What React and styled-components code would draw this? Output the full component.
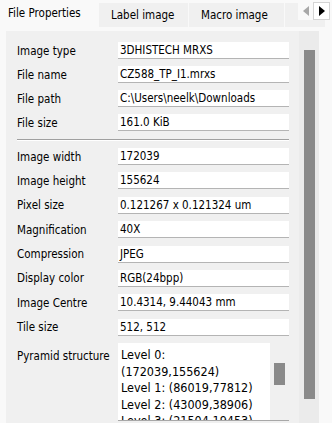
import React from "react";
import styled, { createGlobalStyle } from "styled-components";

const Global = createGlobalStyle`
  html, body { margin: 0; padding: 0; background: #f9f9f9; }
  body {
    font-family: "DejaVu Sans Condensed", "DejaVu Sans", sans-serif;
    font-stretch: condensed;
    font-size: 11.5px;
    color: #000;
  }
`;

const Window = styled.div`
  width: 332px;
  height: 423px;
  overflow: hidden;
  display: flex;
  flex-direction: column;
  background: #f9f9f9;
`;

const TabBar = styled.div`
  position: relative;
  height: 27px;
  display: flex;
  align-items: flex-start;
  padding-left: 2px;
  flex-shrink: 0;
`;

const Tab = styled.div`
  box-sizing: border-box;
  width: ${(p) => p.$w}px;
  height: ${(p) => (p.$active ? 30 : 24)}px;
  margin-top: ${(p) => (p.$active ? 0 : 3)}px;
  margin-left: ${(p) => (p.$active ? 0 : 1)}px;
  padding-left: ${(p) => p.$pad}px;
  background: ${(p) => (p.$active ? "#f9f9f9" : "#f0f0f0")};
  display: flex;
  align-items: center;
  white-space: nowrap;
  overflow: hidden;
  flex-shrink: 0;
  position: relative;
  z-index: ${(p) => (p.$active ? 2 : 1)};
  padding-bottom: ${(p) => (p.$active ? 4 : 0)}px;
`;

const Arrows = styled.div`
  position: absolute;
  top: 2px;
  right: 2px;
  display: flex;
  z-index: 3;
`;

const ArrowBtn = styled.div`
  box-sizing: border-box;
  width: ${(p) => p.$w}px;
  height: 18px;
  display: flex;
  align-items: center;
  justify-content: center;
  background: ${(p) => (p.$enabled ? "#ffffff" : "#f9f9f9")};
  border: 1px solid ${(p) => (p.$enabled ? "#d4d4d4" : "transparent")};
`;

const Pane = styled.div`
  flex: 1;
  display: flex;
  padding: 4px 13px 0 6px;
  min-height: 0;
`;

const Panel = styled.div`
  flex: 1;
  display: flex;
  background: #f0f0f0;
  min-height: 0;
`;

const Content = styled.div`
  flex: 1;
  padding: 11px 0 0 11px;
  display: flex;
  flex-direction: column;
`;

const Group = styled.div`
  display: flex;
  flex-direction: column;
  gap: ${(p) => p.$gap}px;
`;

const Row = styled.div`
  display: grid;
  grid-template-columns: 101px 171px;
  align-items: ${(p) => (p.$top ? "start" : "center")};
`;

const Label = styled.div`
  white-space: nowrap;
  line-height: 16px;
  padding-top: ${(p) => (p.$top ? 5 : 0)}px;
`;

const Field = styled.div`
  box-sizing: border-box;
  height: 17px;
  background: #ffffff;
  border-bottom: 1px solid #b4b4b4;
  padding-left: 2px;
  line-height: 16px;
  white-space: nowrap;
  overflow: hidden;
`;

const Separator = styled.div`
  width: 272px;
  height: 0;
  border-top: 1px solid #a0a0a0;
  border-bottom: 1px solid #ffffff;
  margin: 8px 0 7px 0;
`;

const TextBox = styled.div`
  box-sizing: border-box;
  height: 78px;
  background: #ffffff;
  border-bottom: 1px solid #a8a8a8;
  display: flex;
  overflow: hidden;
`;

const TextLines = styled.div`
  flex: 1;
  padding: 4px 0 0 3px;
  font-size: 12.5px;
  line-height: 16.5px;
  white-space: nowrap;
  overflow: hidden;
`;

const MiniScroll = styled.div`
  width: 19px;
  background: #f0f0f0;
  padding: 20px 0 0 4px;
  box-sizing: border-box;
`;

const Thumb = styled.div`
  width: 11px;
  height: ${(p) => p.$h}px;
  background: #8a8a8a;
`;

const ScrollBar = styled.div`
  width: 20px;
  background: #ebebeb;
  padding: 19px 0 0 5px;
  box-sizing: border-box;
`;

const rows1 = [
  ["Image type", "3DHISTECH MRXS"],
  ["File name", "CZ588_TP_I1.mrxs"],
  ["File path", "C:\\Users\\neelk\\Downloads"],
  ["File size", "161.0 KiB"],
];

const rows2 = [
  ["Image width", "172039"],
  ["Image height", "155624"],
  ["Pixel size", "0.121267 x 0.121324 um"],
  ["Magnification", "40X"],
  ["Compression", "JPEG"],
  ["Display color", "RGB(24bpp)"],
  ["Image Centre", "10.4314, 9.44043 mm"],
  ["Tile size", "512, 512"],
];

const pyramid = [
  "Level 0:",
  "(172039,155624)",
  "Level 1: (86019,77812)",
  "Level 2: (43009,38906)",
  "Level 3: (21504,19453)",
];

export default function App() {
  return (
    <Window>
      <Global />
      <TabBar>
        <Tab $active $w={96} $pad={6}>File Properties</Tab>
        <Tab $w={89} $pad={12}>Label image</Tab>
        <Tab $w={95} $pad={12}>Macro image</Tab>
        <Tab $w={40} $pad={12} />
        <Arrows>
          <ArrowBtn $w={15}>
            <svg width="6" height="10" viewBox="0 0 6 10">
              <path d="M6 0 L0 5 L6 10 Z" fill="#a8a8a8" />
            </svg>
          </ArrowBtn>
          <ArrowBtn $enabled $w={17}>
            <svg width="6" height="10" viewBox="0 0 6 10">
              <path d="M0 0 L6 5 L0 10 Z" fill="#000" />
            </svg>
          </ArrowBtn>
        </Arrows>
      </TabBar>
      <Pane>
        <Panel>
          <Content>
            <Group $gap={7}>
              {rows1.map(([k, v]) => (
                <Row key={k}>
                  <Label>{k}</Label>
                  <Field>{v}</Field>
                </Row>
              ))}
            </Group>
            <Separator />
            <Group $gap={7.4}>
              {rows2.map(([k, v]) => (
                <Row key={k}>
                  <Label>{k}</Label>
                  <Field>{v}</Field>
                </Row>
              ))}
              <Row $top>
                <Label $top>Pyramid structure</Label>
                <TextBox>
                  <TextLines>
                    {pyramid.map((l) => (
                      <div key={l}>{l}</div>
                    ))}
                  </TextLines>
                  <MiniScroll>
                    <Thumb $h={22} />
                  </MiniScroll>
                </TextBox>
              </Row>
            </Group>
          </Content>
          <ScrollBar>
            <Thumb $h={349} />
          </ScrollBar>
        </Panel>
      </Pane>
    </Window>
  );
}
